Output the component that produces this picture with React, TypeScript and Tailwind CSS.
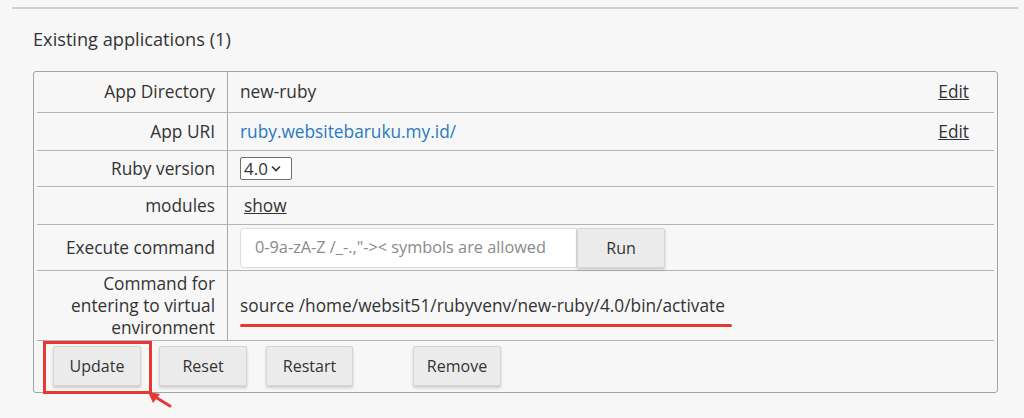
import React from 'react';

const font = { fontFamily: '"Open Sans", "Noto Sans", sans-serif' };

function Row({ label, h, children, last }: { label: React.ReactNode; h: string; children: React.ReactNode; last?: boolean }) {
  return (
    <div className={`flex ${h} ${last ? '' : 'border-b border-[#b4b4b4]'}`}>
      <div className="w-[191px] shrink-0 border-r border-[#a8a8a8] flex items-center justify-end pr-[12px] text-right leading-[22px]">
        {label}
      </div>
      <div className="flex-1 flex items-center pl-[12px] pr-[25px]">{children}</div>
    </div>
  );
}

const btn =
  'h-[40px] bg-[#ebebeb] border border-[#d6d6d6] rounded-[2px] shadow-[0_2px_3px_rgba(0,0,0,0.18)] text-[16px] text-[#333]';

export default function App() {
  return (
    <div className="w-[1024px] h-[418px] bg-[#f7f7f7] text-[#333] text-[17.3px] overflow-hidden" style={font}>
      <div className="ml-[12px] mt-[7px] w-[1006px] h-[2px] bg-[#cfcfcf]" />
      <h2 className="ml-[33px] mt-[17px] text-[18.2px] leading-[26px] text-[#333]">Existing applications (1)</h2>
      <div className="relative ml-[33px] mt-[19px] w-[965px] h-[322px] border border-[#a3a3a3] rounded-[3px] px-[3px]">
        <Row label="App Directory" h="h-[41px]">
          <span className="flex-1">new-ruby</span>
          <a className="underline">Edit</a>
        </Row>
        <Row label="App URI" h="h-[38px]">
          <span className="flex-1 text-[#2b79c2]">ruby.websitebaruku.my.id/</span>
          <a className="underline">Edit</a>
        </Row>
        <Row label="Ruby version" h="h-[36px]">
          <span className="h-[23px] w-[52px] border border-[#6f6f6f] rounded-[2px] bg-white flex items-center pl-[3px] text-[17px] leading-none">
            4.0
            <svg width="10" height="7" viewBox="0 0 10 7" className="ml-[3px]">
              <path d="M1 1.5 L5 5.5 L9 1.5" fill="none" stroke="#333" strokeWidth="1.6" />
            </svg>
          </span>
        </Row>
        <Row label="modules" h="h-[38px]">
          <a className="underline font-medium ml-[4px]">show</a>
        </Row>
        <Row label="Execute command" h="h-[46px]">
          <div className="flex">
            <div className="h-[40px] w-[337px] bg-white border border-[#dcdcdc] rounded-l-[4px] flex items-center pl-[14px] text-[16.3px] text-[#8a8a8a]">
              0-9a-zA-Z /_-.,"-&gt;&lt; symbols are allowed
            </div>
            <button className={`${btn} w-[88px]`}>Run</button>
          </div>
        </Row>
        <Row
          label={
            <span>
              Command for
              <br />
              entering to virtual
              <br />
              environment
            </span>
          }
          h="h-[70px]"
        >
          <span className="relative">
            source /home/websit51/rubyvenv/new-ruby/4.0/bin/activate
            <span className="absolute left-0 top-[31px] w-[492px] h-[3px] bg-[#e53935] rounded-full" />
          </span>
        </Row>
        <div className="flex items-center h-[50px] pl-[16px]">
          <button className={`${btn} w-[88px]`}>Update</button>
          <button className={`${btn} w-[88px] ml-[18px]`}>Reset</button>
          <button className={`${btn} w-[87px] ml-[19px]`}>Restart</button>
          <button className={`${btn} w-[88px] ml-[60px]`}>Remove</button>
        </div>
        {/* red annotation box + arrow */}
        <div className="absolute left-[9px] top-[269px] w-[109px] h-[53px] border-[3px] border-[#e53935]" />
        <svg className="absolute left-[108px] top-[318px]" width="36" height="22" viewBox="0 0 36 22">
          <path d="M10 5 L28 16" stroke="#e53935" strokeWidth="3" strokeLinecap="round" />
          <path d="M6 2 L18 4 L11 13 Z" fill="#e53935" />
        </svg>
      </div>
    </div>
  );
}
